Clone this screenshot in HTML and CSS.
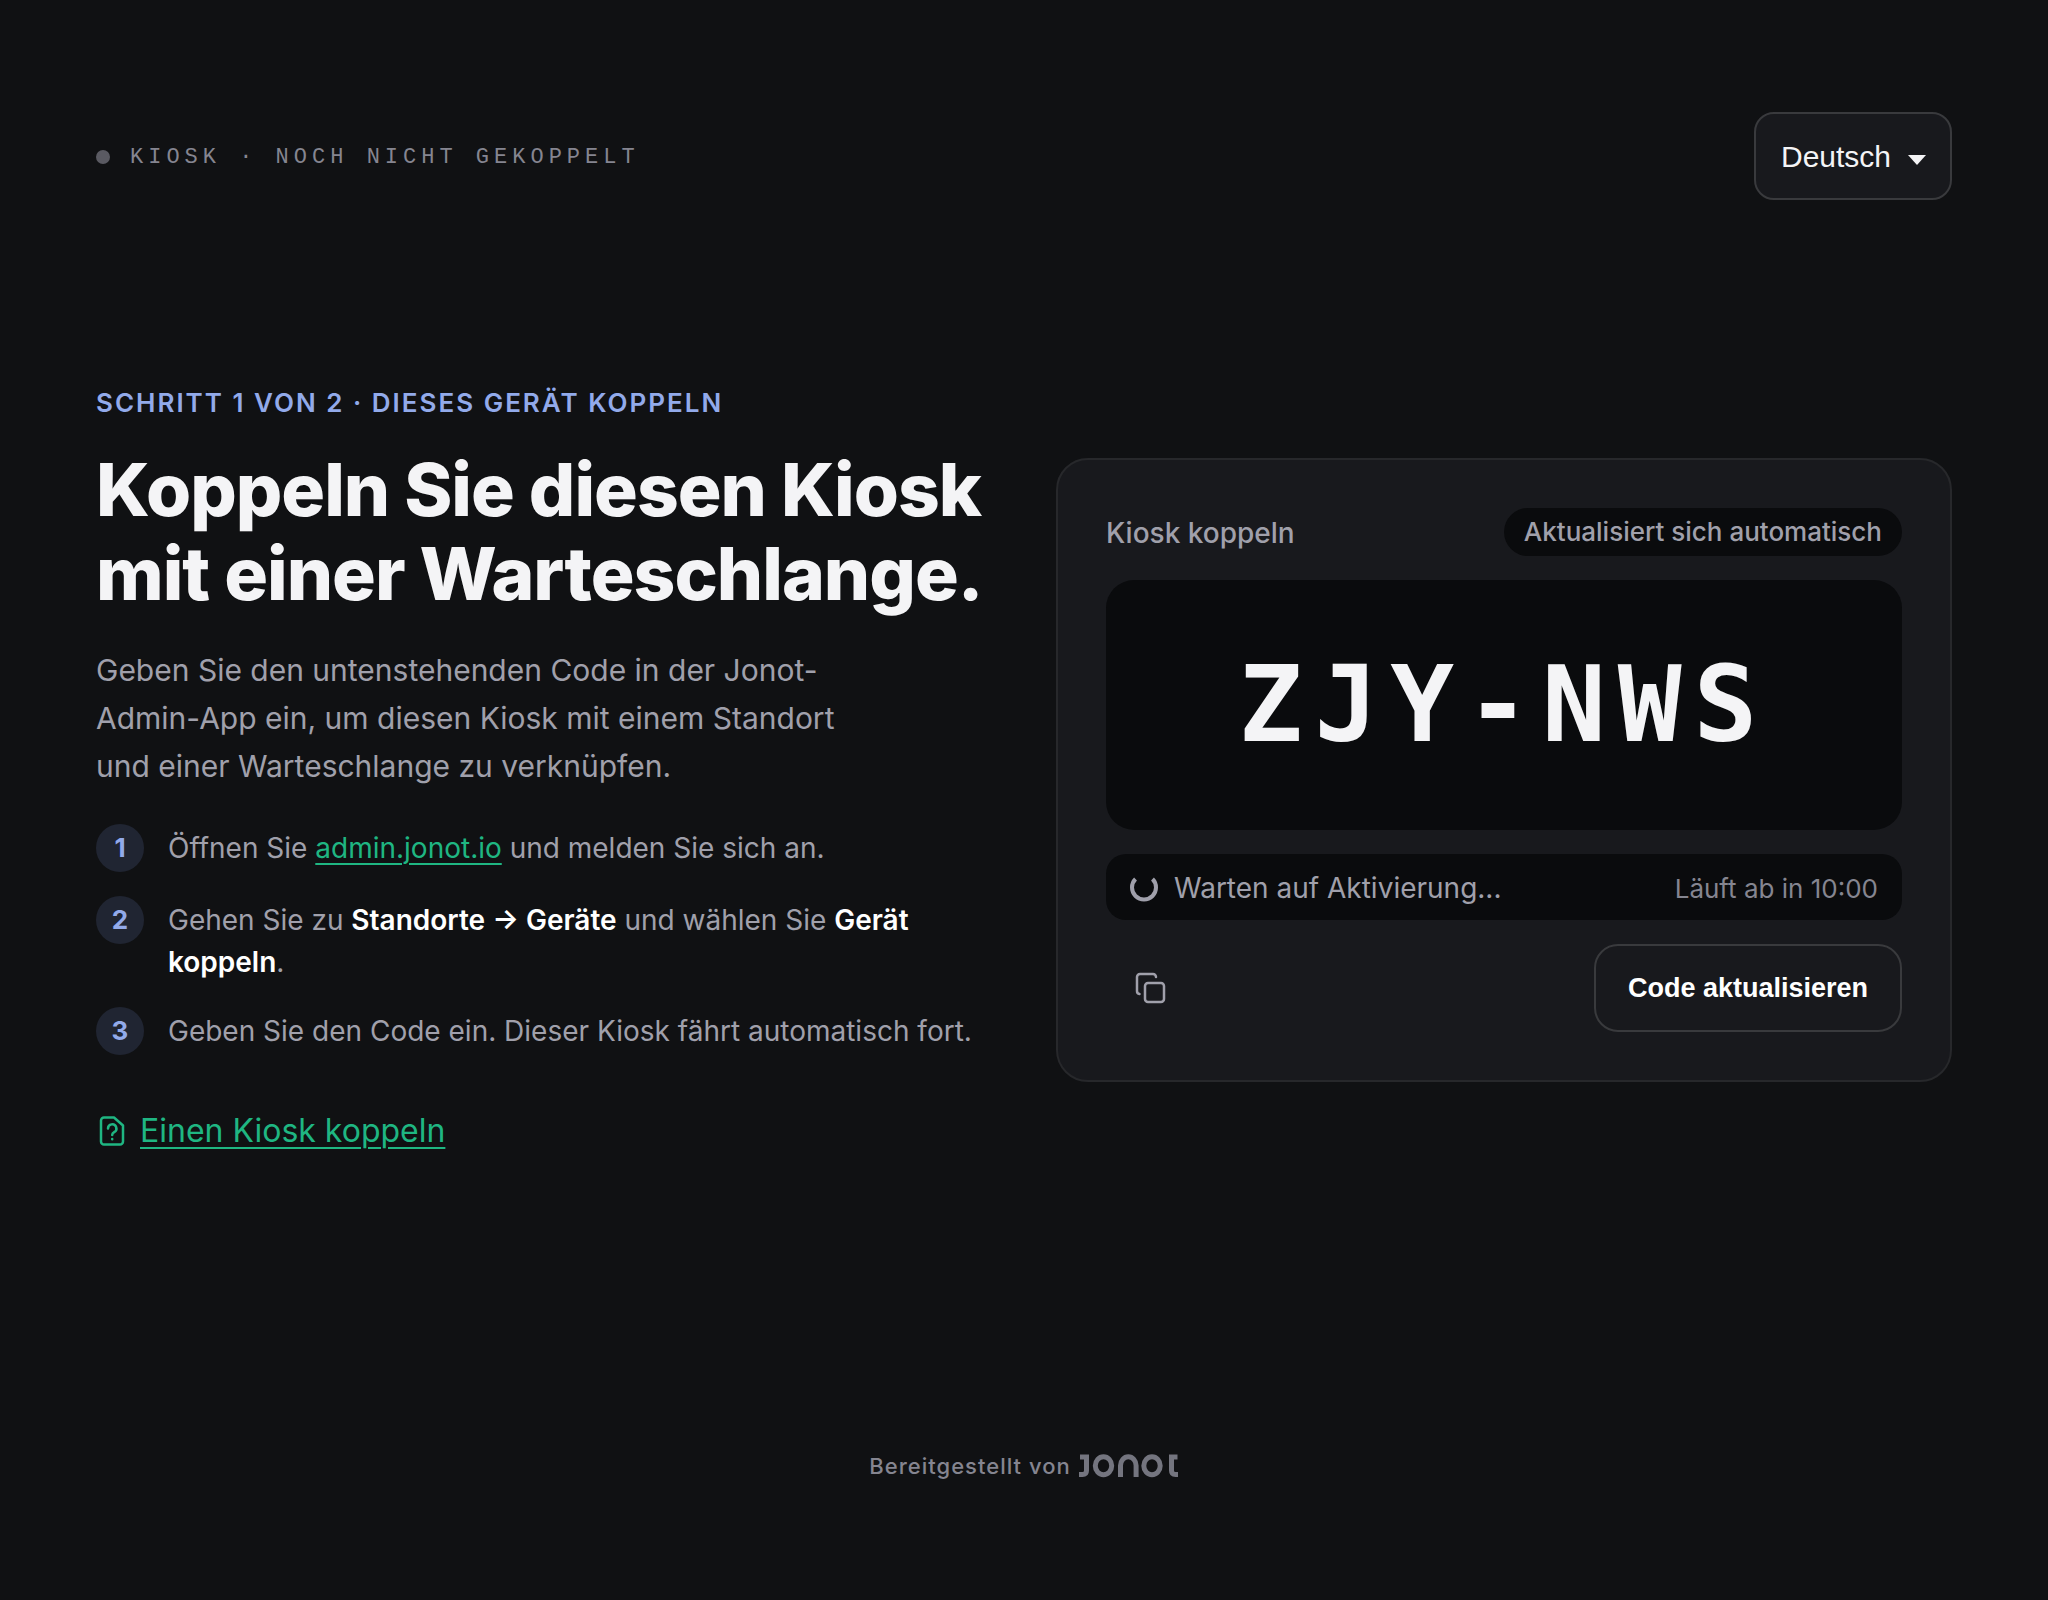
FILE: index.html
```html
<!DOCTYPE html>
<html lang="de">

<head>
	<meta charset="utf-8">
	<meta name="viewport" content="width=device-width, initial-scale=1">
	<title>Kiosk koppeln</title>
	<link rel="stylesheet" href="styles.css">
</head>

<body>
	<header class="topbar">
		<div class="status">
			<span class="status-dot"></span>
			<span>KIOSK · NOCH NICHT GEKOPPELT</span>
		</div>
		<div class="language">
			<select class="language-select" aria-label="Sprache">
				<option selected>Deutsch</option>
			</select>
			<svg class="language-caret" viewBox="0 0 18 10" aria-hidden="true">
				<path d="M0 0h18l-9 10z" />
			</svg>
		</div>
	</header>

	<main class="main">
		<section class="intro">
			<p class="eyebrow">SCHRITT 1 VON 2 · DIESES GERÄT KOPPELN</p>
			<h1 class="title">Koppeln Sie diesen Kiosk mit einer Warteschlange.</h1>
			<p class="lead">Geben Sie den untenstehenden Code in der Jonot-Admin-App ein, um diesen Kiosk mit einem Standort und einer Warteschlange zu verknüpfen.</p>
			<ol class="steps">
				<li class="step">
					<span class="step-number">1</span>
					<span class="step-text">Öffnen Sie <a class="link" href="#">admin.jonot.io</a> und melden Sie sich an.</span>
				</li>
				<li class="step">
					<span class="step-number">2</span>
					<span class="step-text">Gehen Sie zu <strong>Standorte → Geräte</strong> und wählen Sie <strong>Gerät koppeln</strong>.</span>
				</li>
				<li class="step">
					<span class="step-number">3</span>
					<span class="step-text">Geben Sie den Code ein. Dieser Kiosk fährt automatisch fort.</span>
				</li>
			</ol>
			<div class="help">
				<svg class="icon" viewBox="0 0 32 32" aria-hidden="true">
					<path d="M8 2.500H18L27 10.500V26.500a3 3 0 0 1-3 3H8a3 3 0 0 1-3-3V5.500a3 3 0 0 1 3-3z" />
					<path d="M12 13.500a4.200 4.200 0 1 1 6.200 3.700c-1.400.8-2 1.500-2 2.800M16.200 24v.2" />
				</svg>
				<a class="link" href="#">Einen Kiosk koppeln</a>
			</div>
		</section>

		<section class="card">
			<div class="card-head">
				<h2 class="card-title">Kiosk koppeln</h2>
				<span class="badge">Aktualisiert sich automatisch</span>
			</div>
			<div class="code">ZJY-NWS</div>
			<div class="waiting">
				<svg class="spinner" viewBox="0 0 28 28" aria-hidden="true">
					<path d="M5.500 5a12 12 0 1 0 17 0" />
				</svg>
				<span>Warten auf Aktivierung...</span>
				<span class="expires">Läuft ab in 10:00</span>
			</div>
			<div class="actions">
				<button class="copy" type="button" aria-label="Code kopieren">
					<svg class="icon" viewBox="0 0 32 32" aria-hidden="true">
						<rect x="11" y="11" width="19" height="19" rx="3" />
						<path d="M5.500 22A3 3 0 0 1 3 19V5a3 3 0 0 1 3-3h13a3 3 0 0 1 3 3" />
					</svg>
				</button>
				<button class="refresh" type="button">Code aktualisieren</button>
			</div>
		</section>
	</main>

	<footer class="footer">
		<span>Bereitgestellt von</span>
		<svg class="logo" viewBox="0 0 100 24" role="img" aria-label="Jonot">
			<path d="M1 3H7.500V16.500q0 4-4 4H0" />
			<ellipse cx="24.500" cy="11.800" rx="8.200" ry="9" />
			<path d="M41.500 23V11.500a7.800 8.700 0 0 1 15.600 0V23" />
			<ellipse cx="73" cy="11.800" rx="8.200" ry="9" />
			<path d="M98.500 3H92.500V16.500q0 4 4 4H99" />
		</svg>
	</footer>
</body>

</html>
```
FILE: styles.css
```css
* {
	box-sizing: border-box;
}

body {
	display: flex;
	flex-direction: column;
	min-height: 100vh;
	margin: 0;
	padding: 112px 96px;
	background-color: #101113;
	color: #f4f4f6;
	font-family: Inter, sans-serif;
	font-size: 28px;
	line-height: 1.5;
}

h1,
h2,
p,
ol {
	margin: 0;
	padding: 0;
}

.topbar {
	display: flex;
	align-items: center;
	justify-content: space-between;
}

.status {
	display: flex;
	align-items: center;
	gap: 20px;
	padding-top: 2px;
	color: #858590;
	font-family: "Liberation Mono", monospace;
	font-size: 22px;
	letter-spacing: 5px;
}

.status-dot {
	width: 14px;
	height: 14px;
	border-radius: 50%;
	background-color: #5a5a62;
}

.language {
	position: relative;
}

.language-select {
	appearance: none;
	display: block;
	height: 88px;
	padding: 0 58px 0 25px;
	border: 2px solid #393a3d;
	border-radius: 20px;
	background-color: #18191d;
	color: #f4f4f6;
	font-family: "Liberation Sans", sans-serif;
	font-size: 30px;
}

.language-caret {
	position: absolute;
	right: 26px;
	top: 43px;
	width: 18px;
	height: 10px;
	fill: #f4f4f6;
	pointer-events: none;
}

.main {
	display: grid;
	grid-template-columns: 1fr 1fr;
	gap: 64px;
	align-items: center;
	flex: 1;
}

.eyebrow {
	margin-bottom: 24px;
	color: #92aaea;
	font-size: 26px;
	line-height: 42px;
	font-weight: 600;
	letter-spacing: 2px;
}

.title {
	margin-bottom: 30px;
	font-size: 73px;
	line-height: 84px;
	font-weight: 800;
	letter-spacing: -1px;
}

.lead {
	max-width: 760px;
	margin-bottom: 34px;
	color: #a0a0ab;
	font-size: 30px;
	line-height: 48px;
}

.steps {
	display: flex;
	flex-direction: column;
	gap: 24px;
	list-style: none;
}

.step {
	display: flex;
	gap: 24px;
	color: #a0a0ab;
}

.step-number {
	display: flex;
	align-items: center;
	justify-content: center;
	flex: none;
	width: 48px;
	height: 48px;
	border-radius: 50%;
	background-color: #202532;
	color: #92aaea;
	font-size: 26px;
	font-weight: 700;
}

.step-text {
	padding-top: 3px;
}

.step strong {
	color: #fff;
	font-weight: 600;
}

.link {
	color: #1fb682;
	text-underline-offset: 5px;
	text-decoration-thickness: 2px;
}

.icon {
	display: block;
	width: 32px;
	height: 32px;
	fill: none;
	stroke: currentColor;
	stroke-width: 2.5;
	stroke-linecap: round;
	stroke-linejoin: round;
}

.help {
	display: flex;
	align-items: center;
	gap: 12px;
	margin-top: 50px;
	padding-bottom: 2px;
	color: #1fb682;
	font-size: 32px;
	line-height: 52px;
}

.card {
	display: flex;
	flex-direction: column;
	gap: 24px;
	padding: 48px;
	border: 2px solid #27282b;
	border-radius: 32px;
	background-color: #18191d;
}

.card-head {
	display: flex;
	align-items: center;
	justify-content: space-between;
	color: #a0a0ab;
}

.card-title {
	padding-top: 2px;
	font-size: 28px;
	font-weight: 500;
}

.badge {
	padding: 0 20px;
	border-radius: 24px;
	background-color: #0a0b0d;
	font-size: 26px;
	line-height: 48px;
	font-weight: 500;
}

.code {
	padding: 61px 0;
	border-radius: 28px;
	background-color: #0a0b0d;
	font-family: "DejaVu Sans Mono", monospace;
	font-size: 106px;
	line-height: 128px;
	font-weight: 700;
	letter-spacing: 12px;
	text-align: center;
}

.waiting {
	display: flex;
	align-items: center;
	gap: 16px;
	padding: 13px 24px 11px;
	border-radius: 20px;
	background-color: #0a0b0d;
	color: #a0a0ab;
}

.spinner {
	width: 28px;
	height: 28px;
	fill: none;
	stroke: currentColor;
	stroke-width: 4;
}

.expires {
	margin-left: auto;
	color: #858590;
	font-size: 26px;
}

.actions {
	display: flex;
	justify-content: space-between;
}

.copy {
	display: flex;
	align-items: center;
	justify-content: center;
	width: 88px;
	height: 88px;
	border: none;
	background: none;
	color: #a0a0ab;
}

.refresh {
	height: 88px;
	padding: 0 32px;
	border: 2px solid #393a3d;
	border-radius: 24px;
	background: none;
	color: #fff;
	font-family: "Liberation Sans", sans-serif;
	font-size: 27px;
	font-weight: 700;
}

.footer {
	display: flex;
	align-items: center;
	justify-content: center;
	gap: 8px;
	padding-top: 104px;
	color: #858590;
	font-size: 22px;
	line-height: 44px;
	font-weight: 500;
	letter-spacing: 1px;
}

.logo {
	width: 100px;
	height: 24px;
	fill: none;
	stroke: #74757f;
	stroke-width: 5;
}
```
